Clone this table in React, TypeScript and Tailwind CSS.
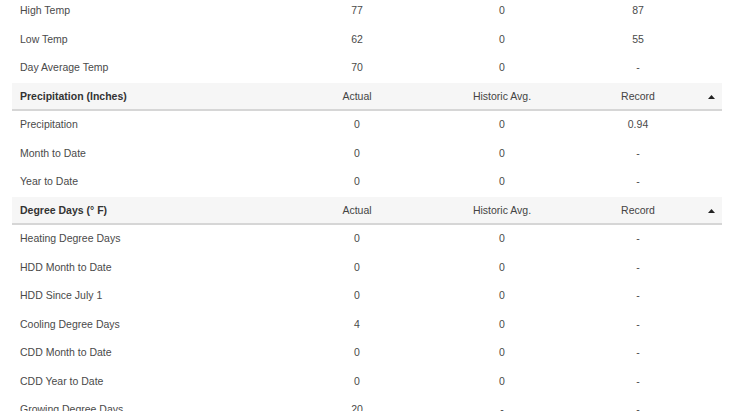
const font = { fontFamily: '"Liberation Sans", Arial, sans-serif' };

type Row = { label: string; actual: string; hist: string; record: string };
type Section = { title?: string; rows: Row[] };

const sections: Section[] = [
  {
    rows: [
      { label: "High Temp", actual: "77", hist: "0", record: "87" },
      { label: "Low Temp", actual: "62", hist: "0", record: "55" },
      { label: "Day Average Temp", actual: "70", hist: "0", record: "-" },
    ],
  },
  {
    title: "Precipitation (Inches)",
    rows: [
      { label: "Precipitation", actual: "0", hist: "0", record: "0.94" },
      { label: "Month to Date", actual: "0", hist: "0", record: "-" },
      { label: "Year to Date", actual: "0", hist: "0", record: "-" },
    ],
  },
  {
    title: "Degree Days (° F)",
    rows: [
      { label: "Heating Degree Days", actual: "0", hist: "0", record: "-" },
      { label: "HDD Month to Date", actual: "0", hist: "0", record: "-" },
      { label: "HDD Since July 1", actual: "0", hist: "0", record: "-" },
      { label: "Cooling Degree Days", actual: "4", hist: "0", record: "-" },
      { label: "CDD Month to Date", actual: "0", hist: "0", record: "-" },
      { label: "CDD Year to Date", actual: "0", hist: "0", record: "-" },
      { label: "Growing Degree Days", actual: "20", hist: "-", record: "-" },
    ],
  },
];

const cols = "grid grid-cols-[273px_144px_146px_126px_1fr] items-center";

function SectionHeader({ title }: { title: string }) {
  return (
    <div className={`${cols} h-[28.5px] border-b-2 border-[#d6d6d6] bg-[#f6f6f6] pt-[2px] text-[10.5px] text-[#444]`}>
      <span className="pl-2 font-bold text-[#333]">{title}</span>
      <span className="text-center">Actual</span>
      <span className="text-center">Historic Avg.</span>
      <span className="text-center">Record</span>
      <span className="flex justify-center">
        <svg width="7" height="4" viewBox="0 0 7 4">
          <polygon points="0,4 3.5,0 7,4" fill="#222" />
        </svg>
      </span>
    </div>
  );
}

function DataRow({ row }: { row: Row }) {
  return (
    <div className={`${cols} h-[28.5px] text-[10.5px] text-[#4a4a4a]`}>
      <span className="pl-2">{row.label}</span>
      <span className="text-center">{row.actual}</span>
      <span className="text-center">{row.hist}</span>
      <span className="text-center">{row.record}</span>
      <span />
    </div>
  );
}

export default function App() {
  return (
    <div className="h-[411px] w-[731px] overflow-hidden bg-white" style={font}>
      <div className="-mt-[3px] ml-3 w-[710px]">
        {sections.map((s, i) => (
          <div key={i}>
            {s.title && <SectionHeader title={s.title} />}
            {s.rows.map((r) => (
              <DataRow key={r.label} row={r} />
            ))}
          </div>
        ))}
      </div>
    </div>
  );
}
